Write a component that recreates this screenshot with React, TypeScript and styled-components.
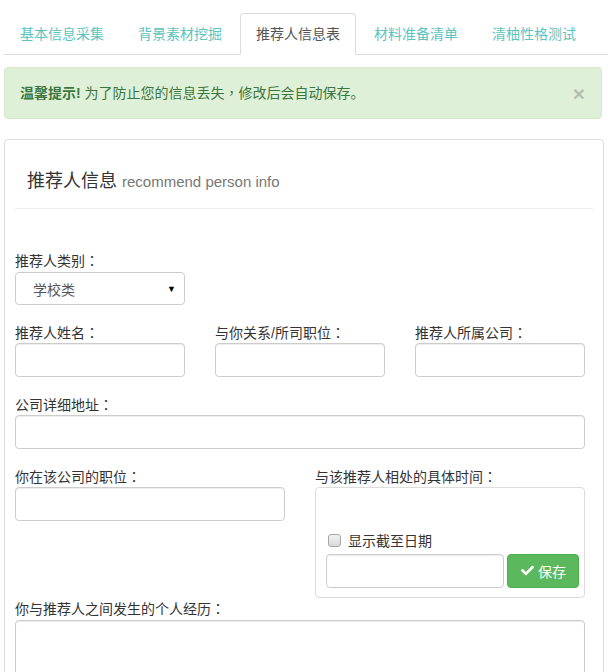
import styled, { createGlobalStyle } from "styled-components";
import { FaCheck } from "react-icons/fa";

const GlobalStyle = createGlobalStyle`
  body {
    margin: 0;
    background: #fff;
    font-family: "Liberation Sans", "Noto Sans CJK SC", sans-serif;
    font-size: 14px;
    color: #333;
  }
  * { box-sizing: border-box; }
`;

const Page = styled.div`
  padding: 13px 0 0 4px;
  overflow: hidden;
`;

const Tabs = styled.ul`
  display: flex;
  list-style: none;
  margin: 0;
  padding: 0;
  border-bottom: 1px solid #ddd;
`;

const Tab = styled.li<{ $active?: boolean }>`
  margin: 0 2px -1px 0;
  padding: 10px 15px;
  line-height: 20px;
  border: 1px solid transparent;
  border-radius: 4px 4px 0 0;
  color: ${(p) => (p.$active ? "#555" : "#5bc4bf")};
  ${(p) =>
    p.$active &&
    `
    background: #fff;
    border-color: #ddd;
    border-bottom-color: transparent;
  `}
`;

const Alert = styled.div`
  display: flex;
  align-items: center;
  justify-content: space-between;
  width: 598px;
  height: 52px;
  margin-top: 12px;
  padding: 0 16px 0 15px;
  line-height: 20px;
  background: #dff0d8;
  border: 1px solid #d6e9c6;
  border-radius: 4px;
  color: #3c763d;
`;

/* full-width punctuation centred in its box, as in the reference */
const Punct = styled.span`
  font-family: "Noto Sans CJK TC", sans-serif;
  line-height: 1;
`;

const Close = styled.span`
  font-family: "Liberation Sans", sans-serif;
  font-size: 21px;
  font-weight: bold;
  line-height: 1;
  color: #000;
  opacity: 0.2;
`;

const Panel = styled.div`
  width: 600px;
  margin-top: 20px;
  padding: 10px 10px 0;
  border: 1px solid #ddd;
  border-radius: 4px;
`;

const Heading = styled.h3`
  margin: 18px 0 13px;
  padding-left: 12px;
  font-size: 18px;
  font-weight: normal;
  line-height: 26px;
  color: #333;
`;

const Sub = styled.small`
  font-size: 15px;
  color: #777;
`;

const Rule = styled.hr`
  margin: 0;
  border: 0;
  border-top: 1px solid #eee;
`;

const Form = styled.form`
  width: 570px;
  padding-top: 42px;
`;

const Row = styled.div<{ $cols: number; $gap?: number }>`
  display: grid;
  grid-template-columns: repeat(${(p) => p.$cols}, 1fr);
  column-gap: 30px;
  align-items: start;
  margin-bottom: ${(p) => p.$gap ?? 18}px;
`;

const Label = styled.label`
  display: block;
  height: 20px;
  line-height: 20px;
  color: #333;
  white-space: nowrap;
`;

const Input = styled.input`
  display: block;
  width: 100%;
  height: 34px;
  padding: 6px 12px;
  border: 1px solid #ccc;
  border-radius: 4px;
  box-shadow: inset 0 1px 1px rgba(0, 0, 0, 0.075);
  font: inherit;
`;

const Select = styled.div`
  display: flex;
  align-items: center;
  justify-content: space-between;
  width: 100%;
  height: 33px;
  margin-top: 1px;
  padding: 0 8px 0 17px;
  border: 1px solid #ccc;
  border-radius: 4px;
  color: #555;
`;

const Caret = styled.span`
  font-size: 9px;
  color: #000;
`;

const Textarea = styled.textarea`
  display: block;
  width: 100%;
  height: 100px;
  margin-top: 1px;
  border: 1px solid #ccc;
  border-radius: 4px;
  box-shadow: inset 0 1px 1px rgba(0, 0, 0, 0.075);
  resize: none;
`;

const DateBox = styled.div`
  height: 111px;
  padding: 10px 5px 10px 10px;
  border: 1px solid #ddd;
  border-radius: 4px;
`;

const CheckRow = styled.div`
  display: flex;
  align-items: center;
  gap: 7px;
  height: 20px;
  margin: 32px 0 3px 2px;
  color: #333;
`;

const CheckBox = styled.span`
  width: 13px;
  height: 13px;
  border: 1px solid #a6a6a6;
  border-radius: 3px;
  background: linear-gradient(#f2f2f2, #d8d8d8);
`;

const InputGroup = styled.div`
  display: flex;
  gap: 3px;
  align-items: center;
`;

const DateInput = styled(Input)`
  width: 178px;
  margin-top: 1px;
`;

const SaveButton = styled.button`
  display: flex;
  align-items: center;
  gap: 4px;
  width: 72px;
  height: 34px;
  padding: 0 0 0 13px;
  background: #5cb85c;
  border: 1px solid #4cae4c;
  border-radius: 4px;
  color: #fff;
  font: inherit;
`;

const tabs = ["基本信息采集", "背景素材挖掘", "推荐人信息表", "材料准备清单", "清柚性格测试"];

function FieldLabel({ text }: { text: string }) {
  return (
    <Label>
      {text}
      <Punct>：</Punct>
    </Label>
  );
}

export default function App() {
  return (
    <Page>
      <GlobalStyle />
      <Tabs>
        {tabs.map((t) => (
          <Tab key={t} $active={t === "推荐人信息表"}>
            {t}
          </Tab>
        ))}
      </Tabs>
      <Alert>
        <span>
          <strong>温馨提示!</strong> 为了防止您的信息丢失<Punct>，</Punct>修改后会自动保存。
        </span>
        <Close>×</Close>
      </Alert>
      <Panel>
        <Heading>
          推荐人信息 <Sub>recommend person info</Sub>
        </Heading>
        <Rule />
        <Form>
          <Row $cols={3}>
            <div>
              <FieldLabel text="推荐人类别" />
              <Select>
                学校类
                <Caret>▼</Caret>
              </Select>
            </div>
          </Row>
          <Row $cols={3}>
            <div>
              <FieldLabel text="推荐人姓名" />
              <Input />
            </div>
            <div>
              <FieldLabel text="与你关系/所司职位" />
              <Input />
            </div>
            <div>
              <FieldLabel text="推荐人所属公司" />
              <Input />
            </div>
          </Row>
          <Row $cols={1}>
            <div>
              <FieldLabel text="公司详细地址" />
              <Input />
            </div>
          </Row>
          <Row $cols={2} $gap={1}>
            <div>
              <FieldLabel text="你在该公司的职位" />
              <Input />
            </div>
            <div>
              <FieldLabel text="与该推荐人相处的具体时间" />
              <DateBox>
                <CheckRow>
                  <CheckBox />
                  显示截至日期
                </CheckRow>
                <InputGroup>
                  <DateInput />
                  <SaveButton type="button">
                    <FaCheck size={13} />
                    保存
                  </SaveButton>
                </InputGroup>
              </DateBox>
            </div>
          </Row>
          <Row $cols={1} $gap={0}>
            <div>
              <FieldLabel text="你与推荐人之间发生的个人经历" />
              <Textarea />
            </div>
          </Row>
        </Form>
      </Panel>
    </Page>
  );
}
